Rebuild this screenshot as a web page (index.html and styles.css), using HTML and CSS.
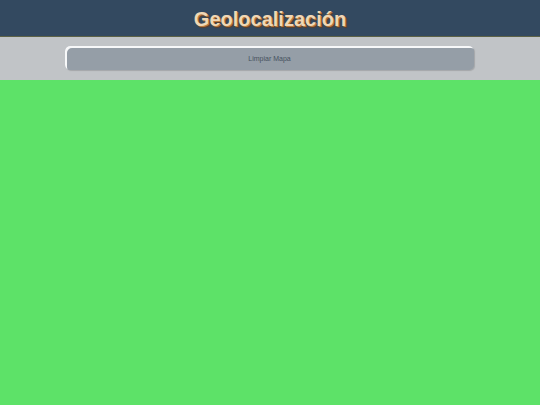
FILE: index.html
```html
<!DOCTYPE html>
<html lang="es">
<head>
<meta charset="utf-8">
<title>Geolocalización</title>
<link rel="stylesheet" href="styles.css">
</head>
<body>
<header class="header">
  <h1 class="title">Geolocalización</h1>
</header>
<div class="toolbar">
  <button class="btn" type="button">Limpiar Mapa</button>
</div>
<main class="map"></main>
</body>
</html>
```

FILE: styles.css
```css
html, body {
  margin: 0;
  padding: 0;
  height: 100%;
}
body {
  font-family: "Liberation Sans", Arial, sans-serif;
  display: flex;
  flex-direction: column;
  background: #5de268;
}
.header {
  height: 36px;
  background: #334960;
  border-bottom: 1px solid #5d6246;
  display: flex;
  align-items: center;
  justify-content: center;
}
.title {
  margin: 0;
  padding-top: 2px;
  font-size: 20px;
  font-weight: bold;
  line-height: 24px;
  color: #efd7b6;
  text-shadow: 1px 1px 0 #b97a3e, 2px 2px 1px rgba(110, 60, 20, 0.7);
}
.toolbar {
  height: 43px;
  background: #c1c4c7;
  display: flex;
  justify-content: center;
  align-items: flex-start;
  padding-top: 9px;
  box-sizing: border-box;
}
.btn {
  width: 409px;
  height: 24px;
  margin-right: 1px;
  border: 0;
  border-radius: 5px;
  background: #959ea7;
  box-shadow: inset 2px 2px 0 #f7f8f9, 1px 1px 1px rgba(0, 0, 0, 0.15);
  font-family: "Liberation Sans", Arial, sans-serif;
  font-size: 7px;
  color: #45515e;
  padding: 0;
}
.map {
  flex: 1;
  background: #5de268;
}
```
